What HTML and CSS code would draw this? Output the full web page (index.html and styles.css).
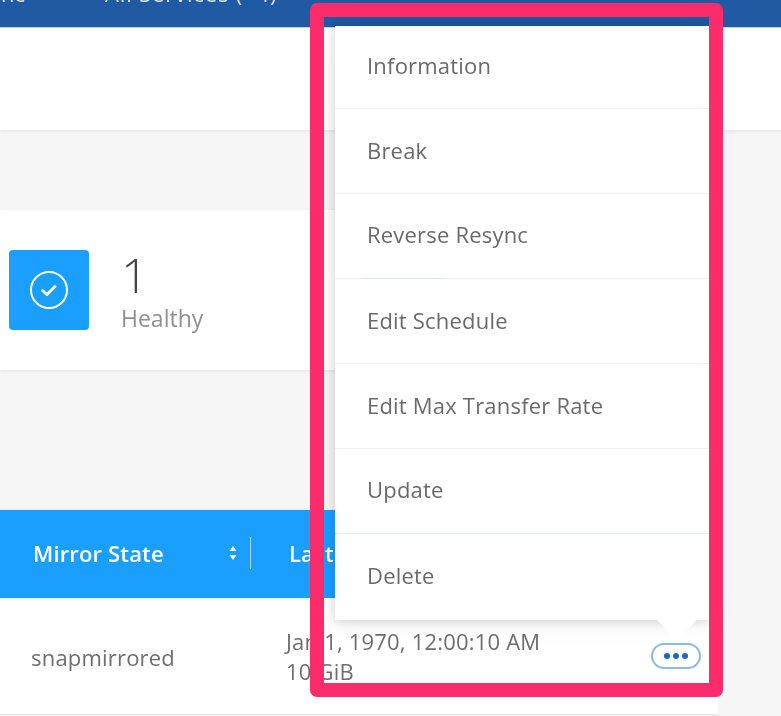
FILE: index.html
```html
<!DOCTYPE html>
<html lang="en">
<head>
<meta charset="utf-8">
<title>Replication</title>
<link rel="stylesheet" href="styles.css">
</head>
<body>
<div class="page">
  <nav class="topbar">
    <span class="nav-first">Sync</span>
    <span class="nav-services">All Services (+4)</span>
  </nav>
  <div class="subheader"></div>
  <main class="content">
    <section class="summary">
      <div class="status-icon">
        <svg width="40" height="40" viewBox="0 0 40 40" fill="none" stroke="#fff">
          <circle cx="20" cy="20" r="18" stroke-width="2"/>
          <path d="M13.5 20.5l4.5 4 8-8" stroke-width="3" stroke-linecap="round" stroke-linejoin="round"/>
        </svg>
      </div>
      <div class="status-text">
        <div class="status-count">1</div>
        <div class="status-label">Healthy</div>
      </div>
    </section>
    <section class="table">
      <div class="thead">
        <div class="th th-mirror">
          <span>Mirror State</span>
          <svg class="sort" width="8" height="16" viewBox="0 0 8 16" fill="#fff"><path d="M4 1l3.5 5h-7zM4 15L.5 10h7z"/></svg>
        </div>
        <div class="th-divider"></div>
        <div class="th th-last">Last Transfer</div>
      </div>
      <div class="tbody">
        <div class="td-state">snapmirrored</div>
        <div class="td-last">
          <div>Jan 1, 1970, 12:00:10 AM</div>
          <div>10 GiB</div>
        </div>
        <button class="more" type="button" aria-label="More"><i></i><i></i><i></i></button>
      </div>
    </section>
  </main>

  <ul class="menu">
    <li class="menu-item first">Information</li>
    <li class="menu-item">Break</li>
    <li class="menu-item ghost">Reverse Resync</li>
    <li class="menu-item">Edit Schedule</li>
    <li class="menu-item">Edit Max Transfer Rate</li>
    <li class="menu-item tint">Update</li>
    <li class="menu-item last">Delete</li>
  </ul>
  <div class="arrow"></div>
  <div class="highlight"></div>
</div>
</body>
</html>
```
FILE: styles.css
```css
* { box-sizing: border-box; }
html, body { margin: 0; height: 716px; overflow: hidden; }
body { background: #f6f6f7; font-family: "Open Sans", "Noto Sans", sans-serif; }

.page { position: relative; width: 781px; height: 716px; overflow: hidden; background: #f6f6f7; filter: blur(0.55px); }

.topbar { height: 28px; background: #1f5aa3; border-bottom: 1px solid #c4d6ee; color: #dbe6f4; font-size: 22px; line-height: 28px; display: flex; overflow: hidden; }
.nav-first { margin-left: -22px; margin-top: -21px; width: 127px; flex: none; }
.nav-services { margin-top: -21px; white-space: nowrap; letter-spacing: 0.85px; }

.subheader { height: 102px; background: #fff; box-shadow: 0 1px 4px rgba(0,0,0,.08); }

.content { padding-top: 80px; }

.summary { width: 718px; height: 160px; background: #fff; box-shadow: 0 1px 4px rgba(0,0,0,.08); display: flex; align-items: center; padding-left: 9px; gap: 32px; }
.status-icon { width: 80px; height: 80px; background: #1a9fff; border-radius: 4px; display: flex; align-items: center; justify-content: center; flex: none; }
.status-text { padding-top: 7px; }
.status-count { font-size: 48px; font-weight: 300; line-height: 52px; color: #444; height: 56px; margin-top: -7px; }
.status-label { font-size: 23px; line-height: 26px; color: #909090; }

.table { margin-top: 140px; width: 718px; }
.thead { height: 88px; padding-bottom: 2px; background: #1a9fff; display: flex; align-items: center; color: #fff; font-size: 22px; letter-spacing: 0.15px; font-weight: 600; box-shadow: 0 1px 3px rgba(0,0,0,.15); position: relative; }
.th { white-space: nowrap; }
.th-mirror { width: 250px; padding-left: 33px; padding-right: 13px; display: flex; align-items: center; justify-content: space-between; }
.th-divider { width: 1px; height: 32px; background: rgba(255,255,255,.6); }
.th-last { padding-left: 38px; }

.tbody { height: 117px; background: #fff; border-bottom: 1px solid #e3e3e5; display: flex; align-items: center; color: #6e6e6e; font-size: 22px; letter-spacing: 0.2px; position: relative; }
.td-state { width: 286px; padding-left: 31px; padding-top: 2px; }
.td-last { line-height: 30px; margin-top: -1px; white-space: nowrap; }

.more { position: absolute; left: 651px; top: 45px; width: 50px; height: 26px; padding: 0; background: #fff; border: 2px solid #8db9e6; border-radius: 13px; display: flex; align-items: center; justify-content: center; gap: 3px; }
.more i { width: 6px; height: 6px; border-radius: 50%; background: #1c66c0; }

.menu { position: absolute; left: 335px; top: 26px; width: 374px; margin: 0; padding: 0; list-style: none; background: #fff; box-shadow: 0 2px 10px rgba(0,0,0,.14), 0 0 30px rgba(0,0,0,.07); color: #6a6a6a; font-size: 22px; letter-spacing: 0.2px; }
.menu-item { height: 85px; padding-left: 32px; padding-bottom: 1px; display: flex; align-items: center; border-bottom: 1px solid #efeff0; white-space: nowrap; }
.menu-item.first { height: 82.5px; padding-bottom: 4px; }
.menu-item.last { border-bottom: 0; height: 86.5px; padding-bottom: 4px; }
.menu-item.tint { border-bottom-color: #e2edf8; padding-bottom: 4px; }
.menu-item.ghost { border-image: linear-gradient(to right, #efeff0 8%, #d5e4f5 8%, #d5e4f5 29%, #efeff0 29%) 1; padding-bottom: 3px; }

.arrow { position: absolute; left: 657px; top: 620px; width: 40px; height: 20px; background: #fff; clip-path: polygon(0 0, 100% 0, 50% 100%); }

.highlight { position: absolute; left: 310px; top: 3px; width: 413px; height: 694px; border: 14px solid #fb2c6c; border-radius: 7px; }
```
